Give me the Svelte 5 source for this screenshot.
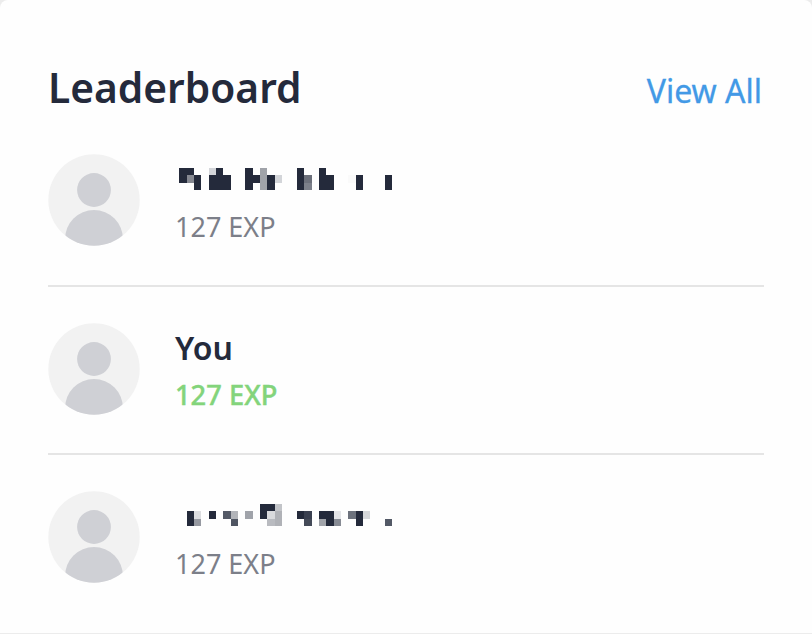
<script>
  const ink = '#242a3b';
  const cell = 7.35;
  // Each entry: column, row, height in cells, colour
  const first = [
    [0,0,2,ink],[1,0,1,ink],[1,1,1,'#858891'],[2,1,2,ink],
    [4,0,1,'#d3d5d9'],[4,1,2,ink],[5,0,3,ink],[6,1,2,ink],
    [9,0,3,ink],[10,1,1,ink],[11,0,3,'#a0a3a9'],[12,1,2,ink],[13,1,1,'#d3d5d9'],
    [16,0,3,ink],[17,1,1,'#6c707b'],[17,2,1,'#7c808a'],
    [19,0,3,ink],[20,1,2,ink],[23,1,1,'#fafafa'],[24,1,2,ink],[28,1,2,ink]
  ];
  const third = [
    [1,1,2,ink],[2,1,1,'#dcdde0'],[2,2,1,'#9699a1'],[4,1,1,ink],
    [6,1,1,'#555a67'],[7,1,1,'#b2b4b9'],[7,2,1,'#4f5562'],[9,1,1,'#a0a3aa'],
    [11,0,2,ink],[12,0,1,ink],[12,1,1,'#d9dadd'],[12,2,1,'#b9bbc0'],[13,0,1,'#c2c4c8'],[13,1,2,'#b0b2b7'],
    [16,1,1,ink],[17,1,1,'#3a4050'],[17,2,1,'#444a58'],
    [19,1,1,ink],[19,2,1,'#a1a4aa'],[20,1,2,ink],[21,1,1,'#e4e5e8'],[21,2,1,'#878b94'],
    [23,1,1,'#6d727d'],[24,1,2,ink],[25,1,1,'#d5d7da'],[28,2,1,'#535966']
  ];
  const people = [
    { blocks: first, exp: 127 },
    { name: 'You', exp: 127, me: true },
    { blocks: third, exp: 127 }
  ];
</script>

<div class="page">
  <section class="card">
    <header>
      <h2>Leaderboard</h2>
      <span class="link">View All</span>
    </header>
    <ul>
      {#each people as p}
        <li>
          <svg class="avatar" viewBox="0 0 92 92">
            <defs><clipPath id="round"><circle cx="46" cy="46" r="45.7" /></clipPath></defs>
            <circle cx="46" cy="46" r="45.7" fill="#f2f2f2" />
            <g clip-path="url(#round)" fill="#cfd0d5">
              <circle cx="46" cy="36" r="16.9" />
              <circle cx="46" cy="85" r="29" />
            </g>
          </svg>
          <div class="info">
            <div class="name">
              {#if p.blocks}
                <svg class="hidden-name" width="220" height="24" viewBox="0 0 220 24" shape-rendering="crispEdges">
                  {#each p.blocks as [c, r, h, color]}
                    <rect x={c * cell + 0.2} y={r * 7.35} width={cell} height={h * 7.35} fill={color} />
                  {/each}
                </svg>
              {:else}
                {p.name}
              {/if}
            </div>
            <div class="exp" class:me={p.me}>{p.exp} EXP</div>
          </div>
        </li>
      {/each}
    </ul>
  </section>
</div>

<style>
  .page {
    height: 634px;
    background: #ececec;
    overflow: hidden;
    font-family: 'Noto Sans', 'Open Sans', sans-serif;
  }
  .card {
    box-sizing: border-box;
    height: 633px;
    padding: 59px 48px 0;
    background: #fefefe;
    border-radius: 8px 8px 0 0;
  }
  header {
    display: flex;
    justify-content: space-between;
    height: 57px;
    line-height: 56px;
  }
  h2 {
    margin: 0;
    font-size: 40.7px;
    font-weight: 600;
    color: #242a3b;
    white-space: nowrap;
  }
  .link {
    font-size: 32px;
    padding: 4px 2px 0 0;
    color: #4299e6;
    -webkit-text-stroke: 0.3px #4299e6;
    white-space: nowrap;
  }
  ul {
    list-style: none;
    margin: 0;
    padding: 0;
  }
  li {
    box-sizing: border-box;
    display: flex;
    height: 168px;
    padding-top: 36px;
    border-bottom: 2px solid #e5e5e5;
  }
  li:first-child {
    height: 171px;
    padding-top: 38px;
  }
  li:last-child {
    border: 0;
  }
  .avatar {
    width: 92px;
    height: 92px;
  }
  .info {
    padding-left: 35px;
  }
  .name {
    height: 53px;
    line-height: 50px;
    font-size: 32px;
    font-weight: 600;
    color: #242a3b;
  }
  .hidden-name {
    display: block;
    padding: 14px 0 0 4px;
  }
  li:last-child .hidden-name {
    padding-top: 13px;
  }
  .exp {
    height: 40px;
    line-height: 40px;
    font-size: 27px;
    color: #7c7f89;
  }
  .exp.me {
    line-height: 38px;
    font-weight: 500;
    font-size: 27.3px;
    color: #83d47b;
    -webkit-text-stroke: 0.4px #83d47b;
  }
</style>
